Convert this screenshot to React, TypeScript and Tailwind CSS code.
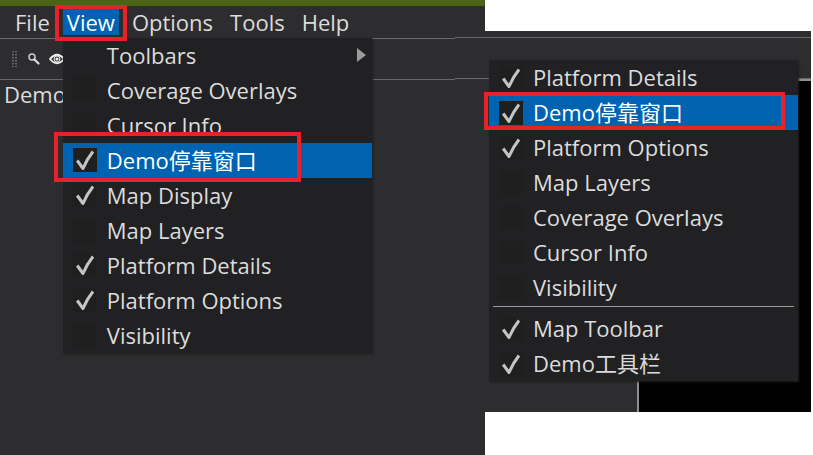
import React, { useState } from 'react';

type MenuEntry = {
  id: string;
  label: string;
  checked?: boolean;
  active?: boolean;
  separatorBefore?: boolean;
};

const VIEW_ITEMS: MenuEntry[] = [
  { id: 'coverage', label: 'Coverage Overlays' },
  { id: 'cursor', label: 'Cursor Info' },
  { id: 'dock', label: 'Demo停靠窗口', checked: true, active: true },
  { id: 'display', label: 'Map Display', checked: true },
  { id: 'layers', label: 'Map Layers' },
  { id: 'details', label: 'Platform Details', checked: true },
  { id: 'options', label: 'Platform Options', checked: true },
  { id: 'visibility', label: 'Visibility' },
];

const CONTEXT_ITEMS: MenuEntry[] = [
  { id: 'details', label: 'Platform Details', checked: true },
  { id: 'dock', label: 'Demo停靠窗口', checked: true, active: true },
  { id: 'options', label: 'Platform Options', checked: true },
  { id: 'layers', label: 'Map Layers' },
  { id: 'coverage', label: 'Coverage Overlays' },
  { id: 'cursor', label: 'Cursor Info' },
  { id: 'visibility', label: 'Visibility' },
  { id: 'toolbar', label: 'Map Toolbar', checked: true, separatorBefore: true },
  { id: 'demo-toolbar', label: 'Demo工具栏', checked: true },
];

const CheckRow = ({ item, marker }: { item: MenuEntry; marker: string }) => {
  const [checked, setChecked] = useState(!!item.checked);

  return (
    <>
      {item.separatorBefore && <hr className="mx-1 mt-px mb-1 border-t border-[#9a9a9a]" />}
      <label
        className={`relative flex h-[35px] items-center pl-[10px] ${
          item.active ? 'bg-[#0063b1] text-white' : 'hover:bg-[#2d2d2f]'
        }`}
      >
        <span className="grid size-6 shrink-0 place-items-center">
          <input
            type="checkbox"
            checked={checked}
            onChange={(e) => setChecked(e.target.checked)}
            className="col-start-1 row-start-1 size-6 appearance-none bg-[#1f1f20]"
          />
          {checked && (
            <svg viewBox="0 0 24 24" className="pointer-events-none col-start-1 row-start-1 size-6" aria-hidden="true">
              <path
                d="M4.2 12.5 L10 20.5 Q14 11 20 3.5"
                fill="none"
                stroke="#c4c4c4"
                strokeWidth="3"
                strokeLinejoin="round"
              />
            </svg>
          )}
        </span>
        <span className="ml-[10px] whitespace-nowrap">{item.label}</span>
        {item.active && <span className={`pointer-events-none absolute z-10 border-4 border-[#e8222b] ${marker}`} />}
      </label>
    </>
  );
};

const ViewMenu = () => (
  <div className="absolute top-[29px] left-0 z-20 w-[309px] bg-[#212123] shadow-[1px_1px_2px_#1c1c1d]">
    <button type="button" className="flex h-[35px] w-full items-center justify-between pr-[6px] pl-11">
      Toolbars
      <svg viewBox="0 0 9 14" className="h-[14px] w-[9px]" aria-hidden="true">
        <path d="M0 0 L9 7 L0 14 Z" fill="#9b9b9b" />
      </svg>
    </button>
    {VIEW_ITEMS.map((item) => (
      <CheckRow key={item.id} item={item} marker="-top-[11px] -left-[9px] h-[50px] w-[247px]" />
    ))}
  </div>
);

const MainWindow = () => (
  <section className="flex flex-col bg-[#2d2d2f]">
    <div className="h-[6px] bg-[#4b6316]" />
    <nav className="flex h-8 items-center gap-[9px] border-b border-[#2d2d2f] pl-[11px]">
      <button type="button" className="px-1 leading-[26px]">File</button>
      <div className="relative">
        <button type="button" className="block bg-[#0063b1] px-1 leading-[26px] text-white">View</button>
        <ViewMenu />
        <span className="pointer-events-none absolute -inset-x-2 -top-1 -bottom-[6px] z-30 border-4 border-[#e8222b]" />
      </div>
      <button type="button" className="px-1 leading-[26px]">Options</button>
      <button type="button" className="px-1 leading-[26px]">Tools</button>
      <button type="button" className="px-1 leading-[26px]">Help</button>
    </nav>
    <div className="flex h-[42px] items-center border-y border-[#68686a] pl-3">
      <svg viewBox="0 0 5 16" className="h-4 w-[5px]" aria-hidden="true">
        <path d="M1 0 V16 M4 0 V16" stroke="#8b8b8c" strokeWidth="1.2" strokeDasharray="1.5 1.5" />
      </svg>
      <button type="button" aria-label="Zoom" className="ml-[10px]">
        <svg viewBox="0 0 14 14" className="size-[14px]">
          <circle cx="5" cy="5" r="3" fill="none" stroke="#d0d0d0" strokeWidth="1.4" />
          <path d="M7.5 7.5 L11.5 11.5" stroke="#e0e0e0" strokeWidth="2.2" strokeLinecap="round" />
        </svg>
      </button>
      <button type="button" aria-label="Show" className="ml-[8px]">
        <svg viewBox="0 0 16 12" className="h-3 w-4">
          <path d="M1 6 Q8 -2.5 15 6 Q8 14.5 1 6 Z" fill="none" stroke="#f2f2f2" strokeWidth="1.8" />
          <circle cx="8" cy="6" r="3" fill="none" stroke="#f2f2f2" strokeWidth="1" />
          <circle cx="8" cy="6" r="1.6" fill="#f2f2f2" />
        </svg>
      </button>
    </div>
    <h2 className="pl-1 leading-7">Demo</h2>
  </section>
);

const MapWindow = () => (
  <section className="relative mt-[31px] mr-[2px] mb-[43px] -ml-[30px] flex flex-col bg-[#2d2d2f]">
    <div className="h-[6px]" />
    <div className="h-[42px] border-y border-[#68686a]" />
    <div className="flex grow">
      <div className="w-[182px] shrink-0" />
      <div className="grow border-t-2 border-l-2 border-[#8f8f90] bg-black" />
    </div>
    <div className="absolute top-[29px] left-[34px] w-[309px] bg-[#212123] shadow-[1px_1px_2px_#1c1c1d]">
      {CONTEXT_ITEMS.map((item) => (
        <CheckRow key={item.id} item={item} marker="-top-[3px] -left-[5px] h-[38px] w-[301px]" />
      ))}
    </div>
  </section>
);

export default function App() {
  return (
    <main className="grid min-h-screen grid-cols-[485fr_328fr] overflow-hidden bg-white font-['Open_Sans','Noto_Sans_CJK_SC',sans-serif] text-[22px] text-[#dcdcdc]">
      <MainWindow />
      <MapWindow />
    </main>
  );
}
